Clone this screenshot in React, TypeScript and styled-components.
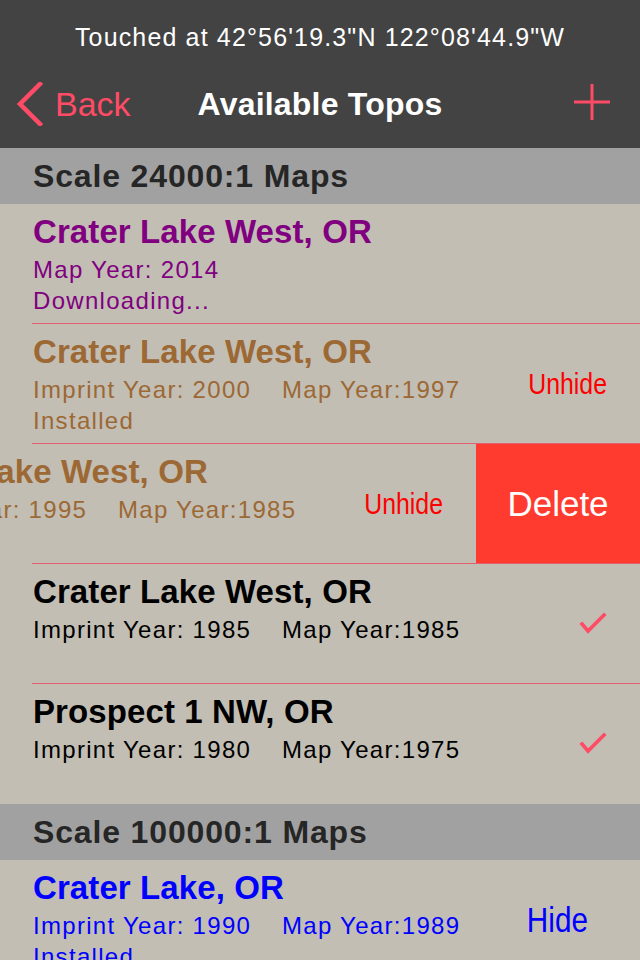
import React from "react";
import styled, { createGlobalStyle } from "styled-components";

const GlobalStyle = createGlobalStyle`
  html, body { margin: 0; padding: 0; background: #c2beb4; }
  body { font-family: "Liberation Sans", Arial, sans-serif; overflow: hidden; }
  * { box-sizing: border-box; }
`;

const PINK = "#ff4b66";

const Screen = styled.div`
  width: 640px;
  height: 960px;
  overflow: hidden;
  background: #c2beb4;
`;

const Header = styled.header`
  background: #434343;
  height: 148px;
  display: flex;
  flex-direction: column;
`;

const StatusLine = styled.div`
  height: 74px;
  line-height: 74px;
  text-align: center;
  color: #ffffff;
  font-size: 25px;
  letter-spacing: 1.15px;
`;

const NavBar = styled.nav`
  height: 60px;
  display: grid;
  grid-template-columns: 1fr auto 1fr;
  align-items: center;
`;

const BackButton = styled.div`
  display: flex;
  align-items: center;
  gap: 11px;
  padding-left: 16px;
  color: ${PINK};
  font-size: 34px;
`;

const NavTitle = styled.div`
  color: #ffffff;
  font-weight: bold;
  font-size: 32px;
  letter-spacing: 0.2px;
`;

const NavRight = styled.div`
  display: flex;
  justify-content: flex-end;
  padding-right: 30px;
  padding-bottom: 5px;
`;

const SectionHeader = styled.div`
  height: 56px;
  background: #a1a1a1;
  color: #262626;
  font-weight: bold;
  font-size: 32px;
  letter-spacing: 0.85px;
  line-height: 56px;
  padding-left: 33px;
`;

const Row = styled.div<{ $last?: boolean }>`
  position: relative;
  height: 120px;
  display: flex;
  overflow: hidden;
  background: #c2beb4;
  ${(p) =>
    p.$last
      ? ""
      : `
  &::after {
    content: "";
    position: absolute;
    left: 32px;
    right: 0;
    bottom: 0;
    height: 1px;
    background: #e3606d;
  }`}
`;

const RowContent = styled.div<{ $shift?: number }>`
  flex: 0 0 640px;
  margin-left: ${(p) => (p.$shift ? -p.$shift : 0)}px;
  display: flex;
  align-items: stretch;
  padding-left: 33px;
`;

const TextBlock = styled.div<{ $color: string }>`
  flex: 1;
  color: ${(p) => p.$color};
  padding-top: 10px;
  white-space: nowrap;
`;

const Title = styled.div`
  font-weight: bold;
  font-size: 33px;
  line-height: 36px;
  letter-spacing: 0.1px;
  margin-bottom: 4px;
`;

const InfoLine = styled.div`
  font-size: 24px;
  line-height: 31px;
  letter-spacing: 1.3px;
  display: grid;
  grid-template-columns: 249px auto;
`;

const Accessory = styled.div<{ $right: number }>`
  display: flex;
  align-items: center;
  padding-right: ${(p) => p.$right}px;
`;

const ActionText = styled.span<{ $color: string; $size: number; $squeeze: number }>`
  display: inline-block;
  color: ${(p) => p.$color};
  font-size: ${(p) => p.$size}px;
  transform: scaleX(${(p) => p.$squeeze});
  transform-origin: right center;
`;

const DeleteAction = styled.div`
  flex: 0 0 164px;
  background: #ff3b30;
  color: #ffffff;
  font-size: 35px;
  display: flex;
  align-items: center;
  justify-content: center;
`;

const Chevron = () => (
  <svg width="28" height="44" viewBox="0 0 28 44">
    <polyline points="24,2 4,22 24,42" fill="none" stroke={PINK} strokeWidth="4.5" strokeLinecap="square" />
  </svg>
);

const Plus = () => (
  <svg width="36" height="36" viewBox="0 0 36 36">
    <line x1="18" y1="0" x2="18" y2="36" stroke={PINK} strokeWidth="3" />
    <line x1="0" y1="18" x2="36" y2="18" stroke={PINK} strokeWidth="3" />
  </svg>
);

const Check = () => (
  <svg width="28" height="24" viewBox="0 0 28 24">
    <polyline points="3,12 9,19 25,3" fill="none" stroke={PINK} strokeWidth="3.6" strokeLinecap="square" />
  </svg>
);

type Item = {
  title: string;
  color: string;
  lines: (string | [string, string])[];
  accessory?: "unhide" | "hide" | "check";
  shift?: number;
  last?: boolean;
};

const renderAccessory = (a?: Item["accessory"]) => {
  if (a === "unhide")
    return (
      <Accessory $right={33}>
        <ActionText $color="#ff0000" $size={30} $squeeze={0.83}>Unhide</ActionText>
      </Accessory>
    );
  if (a === "hide")
    return (
      <Accessory $right={52}>
        <ActionText $color="#0000ff" $size={35} $squeeze={0.85}>Hide</ActionText>
      </Accessory>
    );
  if (a === "check")
    return (
      <Accessory $right={33}>
        <Check />
      </Accessory>
    );
  return null;
};

const MapRow = ({ item }: { item: Item }) => (
  <Row $last={item.last}>
    <RowContent $shift={item.shift}>
      <TextBlock $color={item.color}>
        <Title>{item.title}</Title>
        {item.lines.map((l, i) =>
          Array.isArray(l) ? (
            <InfoLine key={i}>
              <span>{l[0]}</span>
              <span>{l[1]}</span>
            </InfoLine>
          ) : (
            <InfoLine key={i}>
              <span>{l}</span>
            </InfoLine>
          )
        )}
      </TextBlock>
      {renderAccessory(item.accessory)}
    </RowContent>
    {item.shift ? <DeleteAction>Delete</DeleteAction> : null}
  </Row>
);

const BROWN = "#9c6834";

const section1: Item[] = [
  { title: "Crater Lake West, OR", color: "#800080", lines: ["Map Year: 2014", "Downloading..."] },
  {
    title: "Crater Lake West, OR",
    color: BROWN,
    lines: [["Imprint Year: 2000", "Map Year:1997"], "Installed"],
    accessory: "unhide",
  },
  {
    title: "Crater Lake West, OR",
    color: BROWN,
    lines: [["Imprint Year: 1995", "Map Year:1985"]],
    accessory: "unhide",
    shift: 164,
  },
  {
    title: "Crater Lake West, OR",
    color: "#000000",
    lines: [["Imprint Year: 1985", "Map Year:1985"]],
    accessory: "check",
  },
  {
    title: "Prospect 1 NW, OR",
    color: "#000000",
    lines: [["Imprint Year: 1980", "Map Year:1975"]],
    accessory: "check",
    last: true,
  },
];

const section2: Item[] = [
  {
    title: "Crater Lake, OR",
    color: "#0000ff",
    lines: [["Imprint Year: 1990", "Map Year:1989"], "Installed"],
    accessory: "hide",
    last: true,
  },
];

export default function App() {
  return (
    <Screen>
      <GlobalStyle />
      <Header>
        <StatusLine>Touched at 42°56'19.3"N 122°08'44.9"W</StatusLine>
        <NavBar>
          <BackButton>
            <Chevron />
            <span>Back</span>
          </BackButton>
          <NavTitle>Available Topos</NavTitle>
          <NavRight>
            <Plus />
          </NavRight>
        </NavBar>
      </Header>
      <SectionHeader>Scale 24000:1 Maps</SectionHeader>
      {section1.map((it, i) => (
        <MapRow key={i} item={it} />
      ))}
      <SectionHeader>Scale 100000:1 Maps</SectionHeader>
      {section2.map((it, i) => (
        <MapRow key={i} item={it} />
      ))}
    </Screen>
  );
}
